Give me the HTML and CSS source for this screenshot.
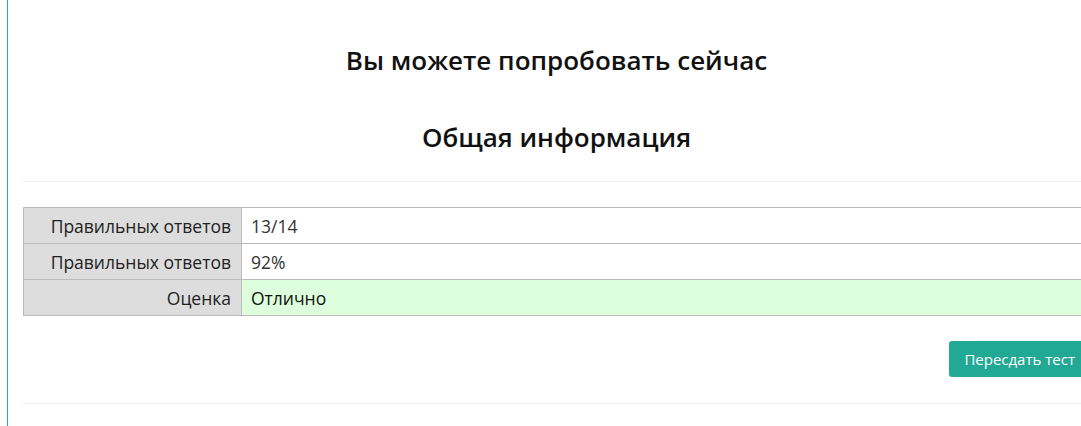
FILE: index.html
```html
<!DOCTYPE html>
<html lang="ru">

<head>
    <meta charset="UTF-8">
    <meta name="viewport" content="width=device-width, initial-scale=1.0">
    <title>Результат теста</title>
    <link rel="stylesheet" href="styles.css">
</head>

<body>
    <div class="main">
        <div class="content">
            <h2 class="title">Вы можете попробовать сейчас</h2>
            <h2 class="title">Общая информация</h2>
            <hr>
            <table class="result-table">
                <tr>
                    <th>Правильных ответов</th>
                    <td>13/14</td>
                </tr>
                <tr>
                    <th>Правильных ответов</th>
                    <td>92%</td>
                </tr>
                <tr>
                    <th>Оценка</th>
                    <td class="grade-good">Отлично</td>
                </tr>
            </table>
            <div class="actions">
                <a class="btn-retry" href="javascript:void(0)">Пересдать тест</a>
            </div>
            <hr>
        </div>
    </div>
</body>

</html>
```

FILE: styles.css
```css
html,
body {
    margin: 0;
    overflow: hidden;
}

body {
    font-family: "Open Sans", "Noto Sans", sans-serif;
    color: #333;
    background: #fff;
}

.main {
    margin-left: 7px;
    border-left: 1px solid #20a8d8;
    min-height: 426px;
    width: 1097px;
}

.content {
    padding: 0 15px;
}

.title {
    margin: 0;
    text-align: center;
    font-size: 26px;
    line-height: 34px;
    font-weight: 600;
    color: #111;
}

.title:first-child {
    padding-top: 43px;
}

.title + .title {
    margin-top: 43px;
}

hr {
    border: none;
    border-top: 1px solid #eee;
    margin: 27px 0 25px;
}

.result-table {
    width: 100%;
    border-collapse: collapse;
    font-size: 17.5px;
}

.result-table th,
.result-table td {
    border: 1px solid #bbb;
    height: 35px;
    padding: 0 10px 0 9px;
}

.result-table th {
    width: 198px;
    background: #ddd;
    text-align: right;
    font-weight: 500;
    color: #222;
}

.result-table td {
    text-align: left;
}

.result-table td.grade-good {
    background: #dfd;
    font-weight: 500;
    color: #111;
}

.actions {
    display: flex;
    justify-content: flex-end;
    margin-top: 25px;
}

.btn-retry {
    display: inline-block;
    background: #22a996;
    color: #fff;
    text-decoration: none;
    font-size: 15px;
    line-height: 36px;
    padding: 0 15px;
    border-radius: 3px;
}

.actions + hr {
    margin-top: 26px;
}
```
